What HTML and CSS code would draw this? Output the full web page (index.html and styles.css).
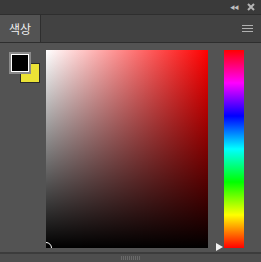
FILE: index.html
```html
<!DOCTYPE html>
<html lang="ko">
<head>
    <meta charset="UTF-8">
    <title>색상</title>
    <link rel="stylesheet" href="styles.css">
</head>
<body>
    <div class="panel">
        <div class="title-bar">
            <span class="collapse">&#9664;&#9664;</span>
            <svg class="close" width="8" height="8" viewBox="0 0 8 8">
                <path d="M1 1 L7 7 M7 1 L1 7" stroke="#b4b4b4" stroke-width="2"/>
            </svg>
        </div>
        <div class="tab-row">
            <div class="tab">색상</div>
            <div class="tab-fill">
                <svg class="menu" width="11" height="8" viewBox="0 0 11 8">
                    <path d="M0 0.5 H11 M0 3.5 H11 M0 6.5 H11" stroke="#b0b0b0" stroke-width="1"/>
                </svg>
            </div>
        </div>
        <div class="body">
            <div class="swatches">
                <div class="bg-swatch"></div>
                <div class="fg-swatch"></div>
            </div>
            <div class="field">
                <div class="field-dark"></div>
                <div class="field-marker"></div>
            </div>
            <div class="hue">
                <div class="hue-strip"></div>
                <div class="hue-marker"></div>
            </div>
        </div>
        <div class="bottom-bar">
            <div class="grip"></div>
        </div>
    </div>
</body>
</html>
```
FILE: styles.css
```css
html, body {
    margin: 0;
    padding: 0;
    background: #535353;
}
.panel {
    width: 261px;
    height: 262px;
    display: flex;
    flex-direction: column;
    font-family: "Noto Sans CJK KR", "Noto Sans", sans-serif;
    overflow: hidden;
}
.title-bar {
    height: 14px;
    background: #3a3a3a;
    border-bottom: 1px solid #2e2e2e;
    display: flex;
    align-items: center;
    justify-content: flex-end;
    gap: 9px;
    padding-right: 6px;
}
.collapse {
    font-size: 5px;
    color: #c0c0c0;
    letter-spacing: -1px;
    line-height: 8px;
}
.tab-row {
    height: 27px;
    display: flex;
    background: #424242;
    border-bottom: 1px solid #2e2e2e;
}
.tab {
    width: 40px;
    background: #535353;
    color: #f0f0f0;
    font-size: 12px;
    line-height: 27px;
    text-align: center;
    border-right: 1px solid #2e2e2e;
}
.tab-fill {
    flex: 1;
    display: flex;
    align-items: center;
    justify-content: flex-end;
    padding-right: 8px;
    padding-top: 1px;
}
.body {
    flex: 1;
    display: flex;
    padding: 7px 0 0 9px;
    background: #535353;
}
.swatches {
    position: relative;
    width: 32px;
    height: 32px;
    margin-top: 2px;
}
.fg-swatch {
    position: absolute;
    left: 0;
    top: 0;
    width: 16px;
    height: 16px;
    background: #000;
    border: 1px solid #fff;
    outline: 2px solid #8a8a8a;
    margin: 2px;
}
.bg-swatch {
    position: absolute;
    left: 11px;
    top: 11px;
    width: 18px;
    height: 18px;
    background: #ebe236;
    border: 1px solid #2a2a2a;
}
.field {
    position: relative;
    width: 162px;
    height: 198px;
    margin-left: 5px;
    overflow: hidden;
    background: linear-gradient(to right, #fff, #f00);
}
.field-dark {
    position: absolute;
    inset: 0;
    background: linear-gradient(to bottom, rgba(0,0,0,0), #000);
}
.field-marker {
    position: absolute;
    left: -6px;
    bottom: -6px;
    width: 10px;
    height: 10px;
    border: 1px solid #fff;
    border-radius: 50%;
}
.hue {
    position: relative;
    margin-left: 16px;
    width: 20px;
    height: 198px;
}
.hue-strip {
    width: 20px;
    height: 198px;
    background: linear-gradient(to bottom, #f00, #f0f, #00f, #0ff, #0f0, #ff0, #f00);
}
.hue-marker {
    position: absolute;
    left: -8px;
    bottom: -3px;
    width: 0;
    height: 0;
    border-top: 4px solid transparent;
    border-bottom: 4px solid transparent;
    border-left: 7px solid #f2f2f2;
}
.bottom-bar {
    height: 8px;
    border-top: 2px solid #3c3c3c;
    background: #4e4e4e;
    display: flex;
    justify-content: center;
    align-items: center;
}
.grip {
    width: 20px;
    height: 4px;
    background: repeating-linear-gradient(to right, #6a6a6a 0 1px, transparent 1px 2px);
}
```
